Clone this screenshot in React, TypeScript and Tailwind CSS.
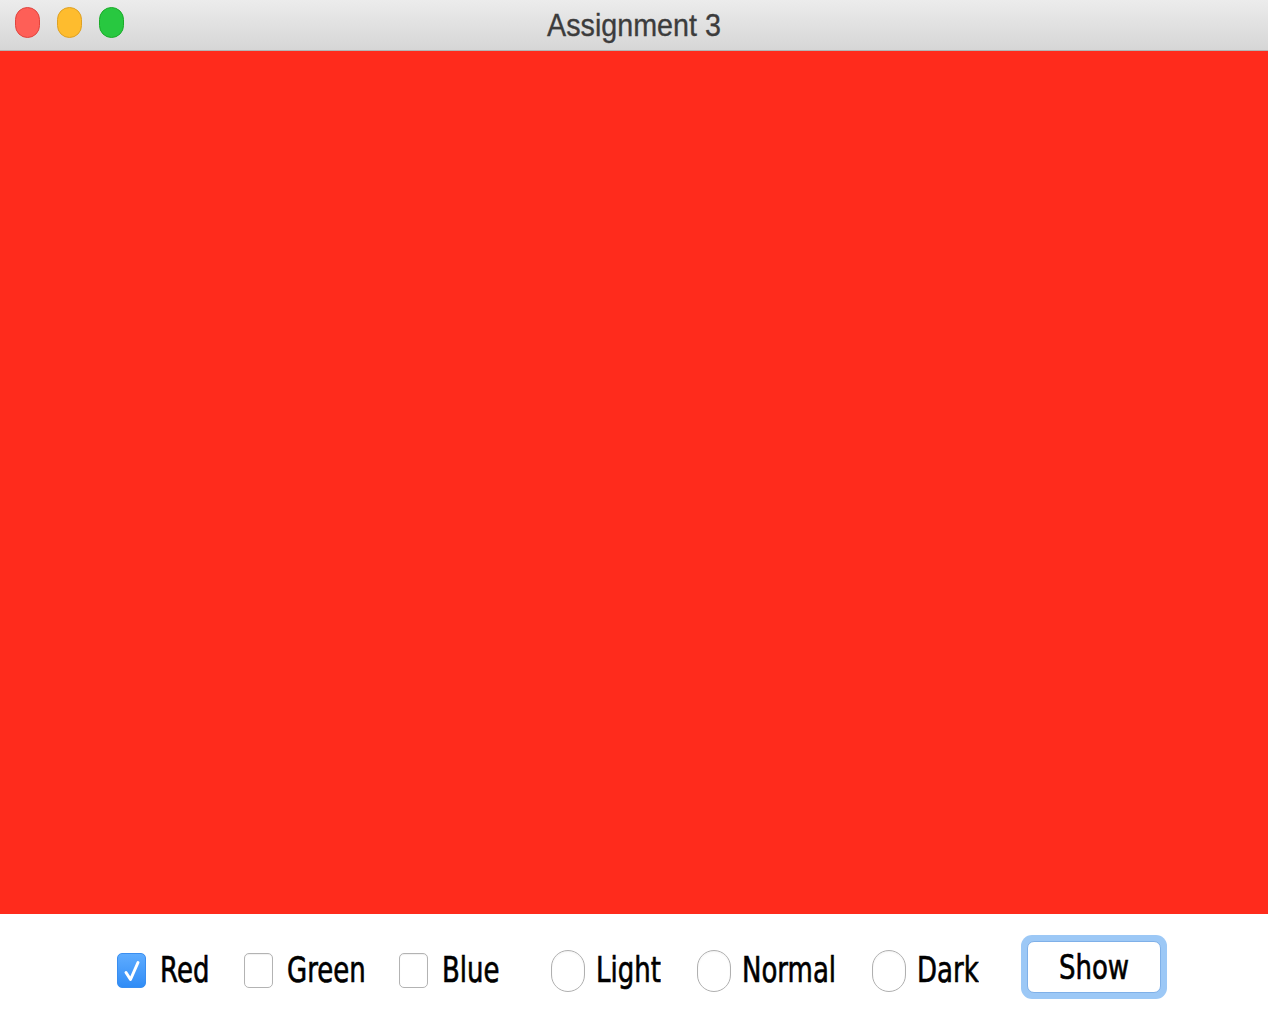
import { useState } from "react";

const labelFont = { fontFamily: '"DejaVu Sans", "Liberation Sans", sans-serif' };

function Label({ text, w }: { text: string; w: string }) {
  return (
    <span className={`inline-block whitespace-nowrap text-left ${w}`}>
      <span
        className="inline-block origin-center scale-y-[1.35] text-[26px] leading-none text-black [-webkit-text-stroke:0.5px_black]"
        style={labelFont}
      >
        {text}
      </span>
    </span>
  );
}

function Check({ checked, label, w, onToggle }: { checked: boolean; label: string; w: string; onToggle: () => void }) {
  return (
    <button type="button" onClick={onToggle} className="flex items-center gap-[14px]">
      {checked ? (
        <span className="flex h-[35px] w-[29px] items-center justify-center rounded-[5px] border border-[#3a8ef0] bg-gradient-to-b from-[#5eacff] to-[#2f8cf6]">
          <svg width="20" height="24" viewBox="0 0 20 24" fill="none">
            <path d="M4 13.5 L8.5 20.5 L16 3.5" stroke="white" strokeWidth="3" strokeLinecap="round" strokeLinejoin="round" />
          </svg>
        </span>
      ) : (
        <span className="h-[35px] w-[29px] rounded-[5px] border border-[#b3b3b3] bg-white shadow-[inset_0_1px_1px_rgba(0,0,0,0.06)]" />
      )}
      <Label text={label} w={w} />
    </button>
  );
}

function Radio({ checked, label, w, onPick }: { checked: boolean; label: string; w: string; onPick: () => void }) {
  return (
    <button type="button" onClick={onPick} className="flex items-center gap-[11px]">
      <span className="flex h-[42px] w-[34px] items-center justify-center rounded-full border-[1.5px] border-[#b0b0b0] bg-white shadow-[inset_0_1px_2px_rgba(0,0,0,0.05)]">
        {checked && <span className="h-[14px] w-[12px] rounded-full bg-[#2f8cf6]" />}
      </span>
      <Label text={label} w={w} />
    </button>
  );
}

export default function App() {
  const [colors, setColors] = useState({ Red: true, Green: false, Blue: false });
  const [shade, setShade] = useState<string | null>(null);

  const toggle = (k: keyof typeof colors) => setColors((c) => ({ ...c, [k]: !c[k] }));

  return (
    <div className="flex h-[1020px] w-[1268px] flex-col overflow-hidden bg-white">
      {/* title bar */}
      <div className="relative flex h-[51px] shrink-0 items-center justify-center border-b border-[#b3b3b3] bg-gradient-to-b from-[#ececec] to-[#d6d6d6]">
        <div className="absolute left-[15px] top-[7px] flex gap-[17px]">
          <span className="h-[31px] w-[25px] rounded-full border border-[#e0443e] bg-[#fe5f57]" />
          <span className="h-[31px] w-[25px] rounded-full border border-[#dea123] bg-[#febc2e]" />
          <span className="h-[31px] w-[25px] rounded-full border border-[#1aab29] bg-[#28c840]" />
        </div>
        <span
          className="inline-block scale-y-[1.12] text-[28.7px] leading-none text-[#3c3c3c] [-webkit-text-stroke:0.3px_#3c3c3c]"
          style={{ fontFamily: '"Liberation Sans", Arial, sans-serif' }}
        >
          Assignment 3
        </span>
      </div>

      {/* colour panel */}
      <div className="h-[863px] shrink-0 bg-[#ff2b1c]" />

      {/* controls */}
      <div className="flex flex-1 items-center pl-[117px] pt-[7px]">
        <Check checked={colors.Red} label="Red" w="w-[47px]" onToggle={() => toggle("Red")} />
        <div className="ml-[37px]">
          <Check checked={colors.Green} label="Green" w="w-[75px]" onToggle={() => toggle("Green")} />
        </div>
        <div className="ml-[37px]">
          <Check checked={colors.Blue} label="Blue" w="w-[53px]" onToggle={() => toggle("Blue")} />
        </div>
        <div className="ml-[56px]">
          <Radio checked={shade === "Light"} label="Light" w="w-[67px]" onPick={() => setShade("Light")} />
        </div>
        <div className="ml-[34px]">
          <Radio checked={shade === "Normal"} label="Normal" w="w-[94px]" onPick={() => setShade("Normal")} />
        </div>
        <div className="ml-[36px]">
          <Radio checked={shade === "Dark"} label="Dark" w="w-[60px]" onPick={() => setShade("Dark")} />
        </div>
        <button
          type="button"
          className="-mt-[7px] ml-[44px] flex h-[64px] w-[146px] items-center justify-center rounded-[11px] bg-[#9cc8f6] p-[6px]"
        >
          <span className="flex h-full w-full items-center justify-center rounded-[7px] border border-[#7fb0e8] bg-white">
            <span
              className="inline-block scale-y-[1.3] text-[26px] leading-none text-black [-webkit-text-stroke:0.5px_black]"
              style={labelFont}
            >
              Show
            </span>
          </span>
        </button>
      </div>
    </div>
  );
}
